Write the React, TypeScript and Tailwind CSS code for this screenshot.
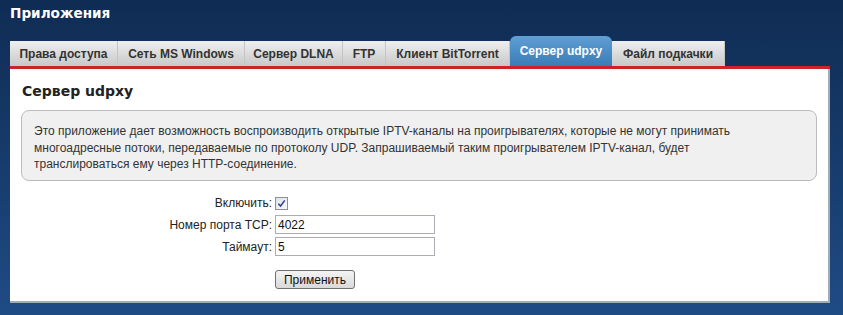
import { useState } from "react";

const tabs = [
  { title: "Права доступа", w: "w-[108px]" },
  { title: "Сеть MS Windows", w: "w-[127px]" },
  { title: "Сервер DLNA", w: "w-[98px]" },
  { title: "FTP", w: "w-[43px]" },
  { title: "Клиент BitTorrent", w: "w-[124px]" },
  { title: "Сервер udpxy", w: "w-[102px]", active: true },
  { title: "Файл подкачки", w: "w-[113px]" },
];

function CheckBox() {
  return (
    <span className="flex h-[13px] w-[13px] items-center justify-center border border-[#8e8f8f] bg-gradient-to-br from-[#dfe3ea] to-[#f7f8fa]">
      <svg viewBox="0 0 10 10" className="h-[9px] w-[9px]">
        <path d="M1.5 5.2 L4 7.8 L8.6 1.6" fill="none" stroke="#2c3f8c" strokeWidth="1.6" />
      </svg>
    </span>
  );
}

export default function App() {
  const [port, setPort] = useState("4022");
  const [timeout, setTimeoutValue] = useState("5");

  return (
    <div className="flex h-[315px] w-full flex-col bg-gradient-to-b from-[#0f2c53] to-[#1f4b85] pl-[10px] font-['Liberation_Sans',Arial,sans-serif]">
      <h1 className="h-[36px] pt-[3px] font-['DejaVu_Sans',Verdana,sans-serif] text-[13.6px] font-bold leading-[20px] text-white">
        Приложения
      </h1>

      {/* tabs */}
      <div className="flex h-[30px] items-end">
        {tabs.map((tab) =>
          tab.active ? (
            <div
              key={tab.title}
              className={`${tab.w} flex h-[30px] items-start justify-center rounded-t-[6px] bg-gradient-to-b from-[#5f9fd3] to-[#3b7cb8] pt-[6px] text-[12px] font-bold text-white`}
            >
              {tab.title}
            </div>
          ) : (
            <div
              key={tab.title}
              className={`${tab.w} flex h-[25px] items-center justify-center border-r border-[#c4c4c4] bg-gradient-to-b from-[#efefef] to-[#c8c8c8] text-[12px] font-bold text-[#333]`}
            >
              {tab.title}
            </div>
          )
        )}
      </div>

      {/* panel */}
      <div className="w-[820px] border-t-[3px] border-[#cd2229]">
        <div className="h-[234px] border-r-2 border-b-2 border-[#a3abb5] bg-white px-[11px] pt-[10px]">
          <h2 className="pl-[1px] font-['DejaVu_Sans',Verdana,sans-serif] text-[14px] font-bold leading-[24px] text-[#222]">
            Сервер udpxy
          </h2>
          <div className="mt-[7px] h-[71px] rounded-[8px] border border-[#bcbcbc] bg-[#f0f0f0] px-[12px] pt-[12px] text-[12px] leading-[16.5px] text-[#333]">
            Это приложение дает возможность воспроизводить открытые IPTV-каналы на проигрывателях, которые не могут принимать
            <br />
            многоадресные потоки, передаваемые по протоколу UDP. Запрашиваемый таким проигрывателем IPTV-канал, будет
            <br />
            транслироваться ему через HTTP-соединение.
          </div>

          <div className="mt-[13px] grid grid-cols-[251px_1fr] items-center gap-x-[3px] gap-y-[3px] text-[12px] text-[#222]">
            <span className="text-right">Включить:</span>
            <span className="flex h-[16px] items-center">
              <CheckBox />
            </span>
            <span className="text-right">Номер порта TCP:</span>
            <input
              value={port}
              onChange={(e) => setPort(e.target.value)}
              className="h-[19px] w-[160px] border border-[#abadb3] px-[2px] text-[12px] text-[#111] outline-none"
            />
            <span className="text-right">Таймаут:</span>
            <input
              value={timeout}
              onChange={(e) => setTimeoutValue(e.target.value)}
              className="h-[19px] w-[160px] border border-[#abadb3] px-[2px] text-[12px] text-[#111] outline-none"
            />
            <span />
            <button className="mt-[11px] h-[19px] w-[80px] rounded-[3px] border border-[#707070] bg-gradient-to-b from-[#f4f4f4] to-[#d9d9d9] text-[12px] leading-none text-[#111]">
              Применить
            </button>
          </div>
        </div>
      </div>
    </div>
  );
}
